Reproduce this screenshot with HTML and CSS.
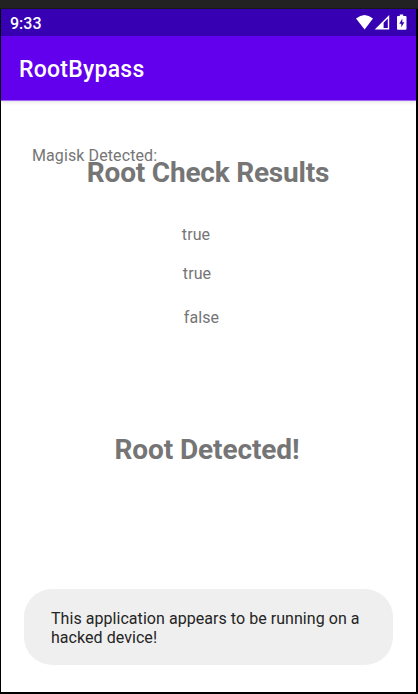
FILE: index.html
```html
<!DOCTYPE html>
<html lang="en">
<head>
<meta charset="utf-8">
<title>RootBypass</title>
<link rel="stylesheet" href="styles.css">
</head>
<body>
<div class="device">
  <header class="status-bar">
    <span class="clock">9:33</span>
    <svg class="status-icons" width="54" height="20" viewBox="0 0 54 20" fill="#fff">
      <path d="M0 8.4Q8.5 1.4 17 8.4L8.6 19.4Z"/>
      <path fill-rule="evenodd" d="M33.2 5V19.5H18.7ZM31.8 8.6L27.6 12.8V18.1H31.8Z"/>
      <path fill-rule="evenodd" d="M43.8 4.6H47.2V6.1H49.6Q50.5 6.1 50.5 7V18.8Q50.5 19.7 49.6 19.7H41.9Q41 19.7 41 18.8V7Q41 6.1 41.9 6.1H43.8ZM46.3 8.5L43.3 13.7H45.3V17.3L48.3 12.2H46.3Z"/>
    </svg>
  </header>
  <div class="app-bar">RootBypass</div>
  <main class="content">
    <div class="heading-group">
      <h1 class="heading">Root Check Results</h1>
      <span class="magisk-label">Magisk Detected:</span>
    </div>
    <p class="result result-first">true</p>
    <p class="result result-second">true</p>
    <p class="result result-third">false</p>
    <h2 class="heading verdict">Root Detected!</h2>
    <div class="toast">This application appears to be running on a hacked device!</div>
  </main>
</div>
</body>
</html>
```

FILE: styles.css
```css
*, *::before { box-sizing: border-box; }
body {
  margin: 0;
  background: #000;
  font-family: Roboto, sans-serif;
}
.device {
  width: 418px;
  height: 694px;
  border: solid #000;
  border-width: 0 2px 2px 1px;
  display: flex;
  flex-direction: column;
  background: #fff;
}
.device::before {
  content: "";
  flex: none;
  height: 9px;
  margin: 0 -2px 0 -1px;
  background: #222;
  border-bottom: 1px solid #181818;
}
.status-bar {
  height: 27px;
  flex: none;
  background: #3700b3;
  display: flex;
  justify-content: space-between;
  padding: 0 6px 0 9px;
  color: #fff;
}
.clock {
  font-size: 16px;
  font-weight: 500;
  line-height: 29px;
}
.status-icons { margin-top: 1px; }
.app-bar {
  height: 65px;
  flex: none;
  background: #6200ee;
  border-bottom: 1px solid #a064f4;
  color: #fff;
  font-size: 23px;
  font-weight: 500;
  line-height: 68px;
  letter-spacing: .25px;
  padding-left: 18px;
  box-shadow: 0 1px 4px rgba(0, 0, 0, .12);
}
.content {
  flex: 1;
  display: flex;
  flex-direction: column;
  align-items: center;
  color: #757575;
  padding-top: 54px;
}
.heading-group {
  position: relative;
  width: 100%;
}
.heading {
  margin: 0;
  font-size: 28px;
  font-weight: 700;
  line-height: 36px;
  letter-spacing: -.2px;
  text-align: center;
  text-indent: -1px;
}
.magisk-label {
  position: absolute;
  left: 31px;
  top: -9px;
  font-size: 16px;
  line-height: 20px;
  letter-spacing: .1px;
  white-space: nowrap;
}
.result {
  margin: 0;
  font-size: 16px;
  line-height: 20px;
  letter-spacing: .1px;
}
.result-first { margin: 34px 25px 0 0; }
.result-second { margin: 19px 23px 0 0; }
.result-third { margin: 24px 14px 0 0; }
.verdict { margin: 104px 2px 0 0; letter-spacing: -.1px; }
.toast {
  width: 369px;
  height: 76px;
  margin-top: 121px;
  padding: 20px 27px;
  border-radius: 28px;
  background: #efefef;
  color: #242424;
  font-size: 16px;
  line-height: 19px;
  letter-spacing: .05px;
}
```
